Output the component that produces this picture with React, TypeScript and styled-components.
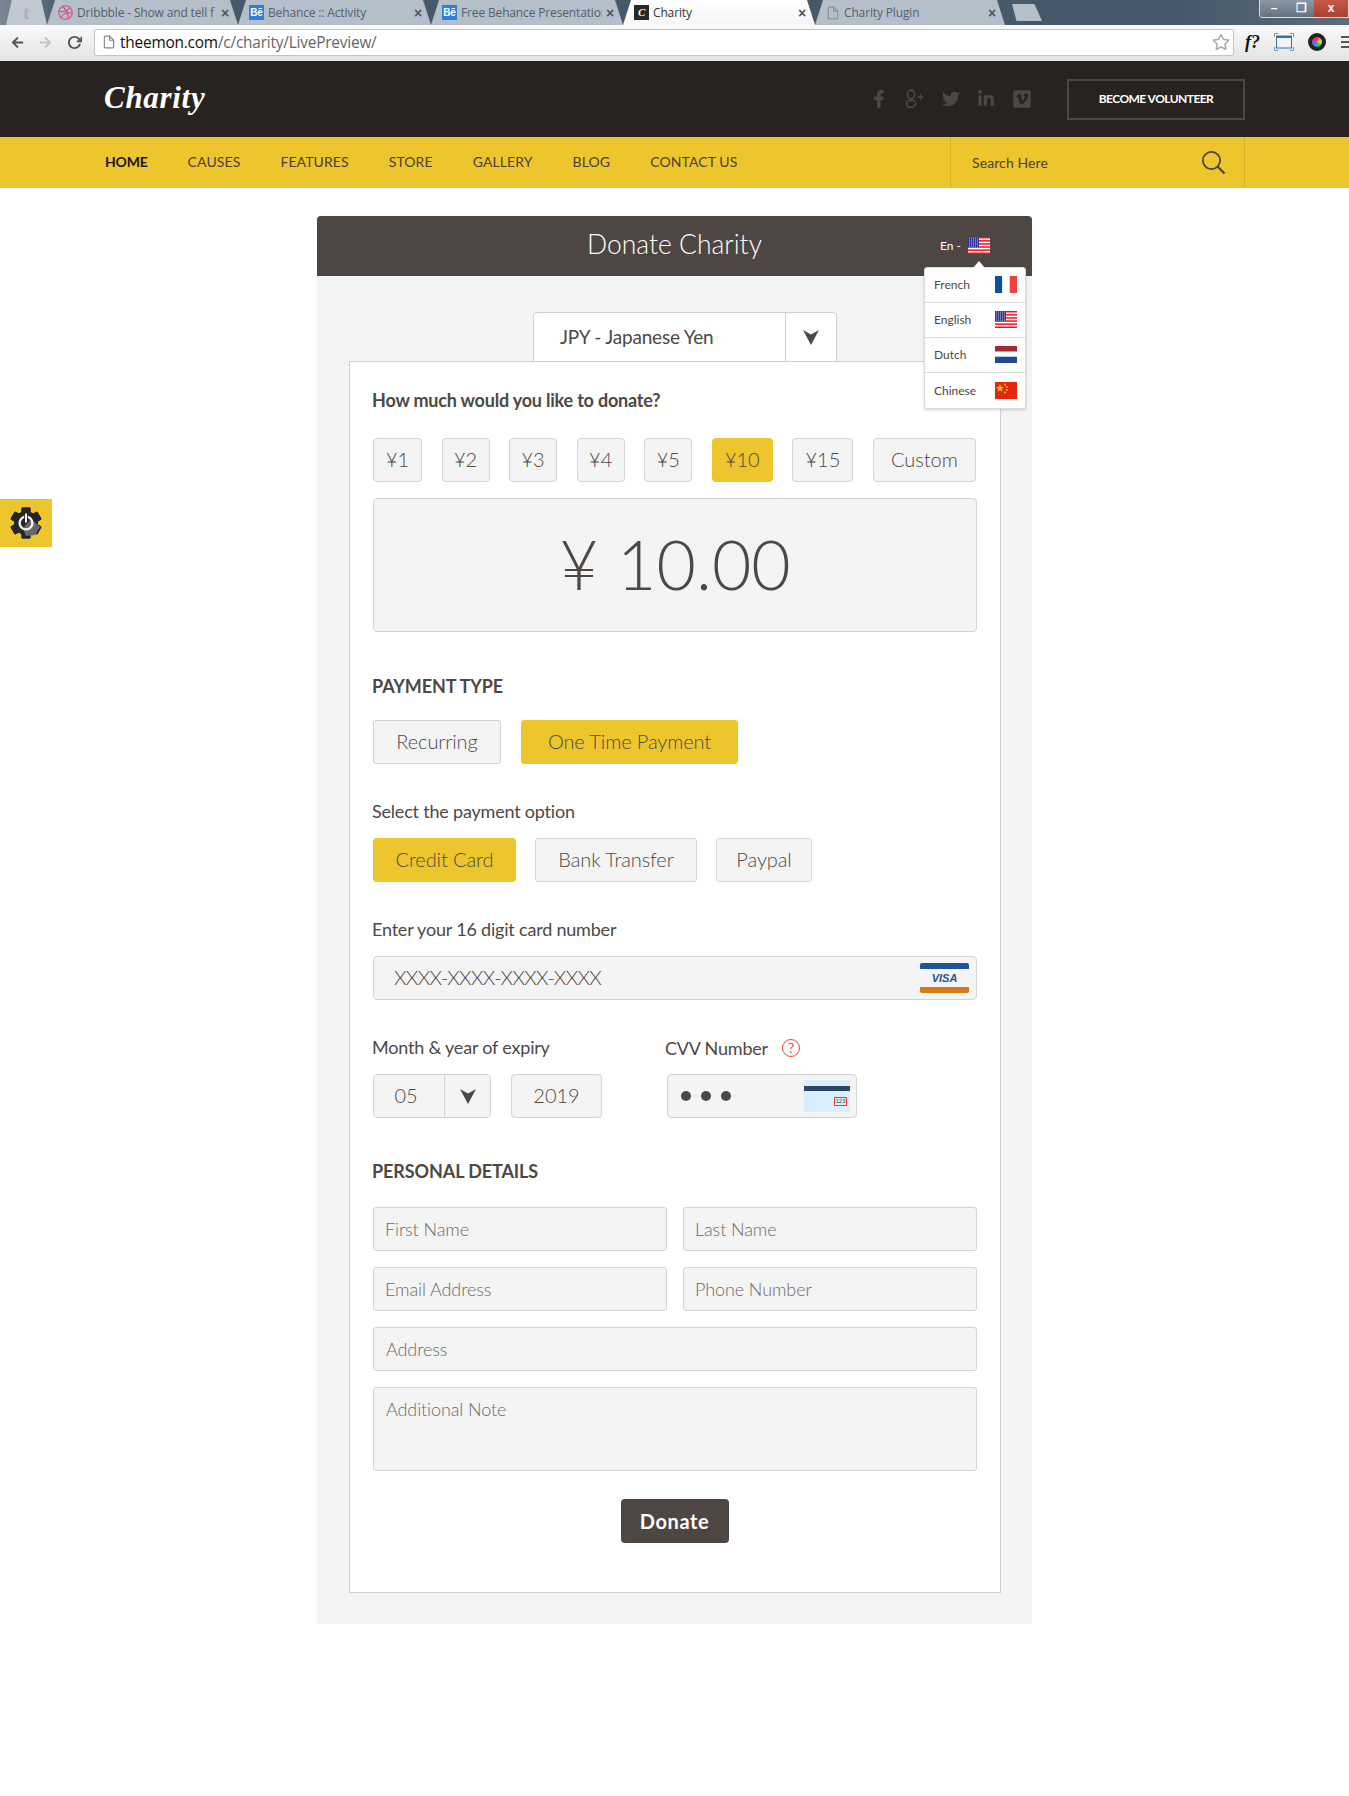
import React from 'react';
import styled, {createGlobalStyle} from 'styled-components';
import {FaArrowLeft, FaArrowRight, FaDribbble, FaFacebookF, FaLinkedinIn, FaTwitter, FaVimeoSquare, FaRegStar} from 'react-icons/fa';
import {FiFile, FiRotateCw} from 'react-icons/fi';

const GlobalStyle = createGlobalStyle`
  html, body {
    margin: 0;
    padding: 0;
    background: #fff;
    font-family: 'Lato', 'Liberation Sans', sans-serif;
    color: #4e4844;
  }
  * { box-sizing: border-box; }
`;

type FlagKind = 'fr' | 'us' | 'nl' | 'cn';

const Flag = ({kind}: {kind: FlagKind}) => {
  if (kind === 'fr') {
    return (
      <svg width="22" height="17" viewBox="0 0 22 17">
        <rect width="7.3" height="17" fill="#0b50a3" />
        <rect x="7.3" width="7.4" height="17" fill="#fff" />
        <rect x="14.7" width="7.3" height="17" fill="#f1423a" />
      </svg>
    );
  }
  if (kind === 'nl') {
    return (
      <svg width="22" height="17" viewBox="0 0 22 17">
        <rect width="22" height="5.5" fill="#a32a37" />
        <rect y="10.7" width="22" height="6.3" fill="#234a90" />
      </svg>
    );
  }
  if (kind === 'cn') {
    return (
      <svg width="22" height="17" viewBox="0 0 22 17">
        <rect width="22" height="17" fill="#e0290f" />
        <polygon points="5,2 6,5 9,5 6.6,6.8 7.5,9.6 5,8 2.5,9.6 3.4,6.8 1,5 4,5" fill="#ffd21f" />
        <circle cx="10" cy="2.5" r="0.9" fill="#ffd21f" />
        <circle cx="12" cy="5" r="0.9" fill="#ffd21f" />
        <circle cx="12" cy="8" r="0.9" fill="#ffd21f" />
        <circle cx="10" cy="10.5" r="0.9" fill="#ffd21f" />
      </svg>
    );
  }
  return (
    <svg width="22" height="17" viewBox="0 0 22 17">
      <rect width="22" height="17" fill="#fff" />
      {[0, 3.1, 6.2, 9.3, 12.4, 15.5].map(y => (
        <rect key={y} y={y} width="22" height="1.5" fill="#f0141e" />
      ))}
      <rect width="11" height="10" fill="#2f2fa0" />
      {[1, 3, 5, 7, 9].map(y =>
        [1, 3, 5, 7, 9].map(x => <circle key={`${x}-${y}`} cx={x + 0.5} cy={y} r="0.55" fill="#d6d6ee" />)
      )}
    </svg>
  );
};

const Chevron = () => (
  <svg width="16" height="15" viewBox="0 0 16 15">
    <polygon points="0,0 8,4.5 16,0 8,15" fill="#4e4844" />
  </svg>
);

const SearchGlyph = () => (
  <svg width="25" height="25" viewBox="0 0 25 25" fill="none" stroke="#4a4030" strokeWidth="1.7">
    <circle cx="10.5" cy="10.5" r="8.6" />
    <line x1="16.8" y1="16.8" x2="23.5" y2="23.5" strokeWidth="2.2" />
  </svg>
);

// thin "g+" mark, the icon packs only have the heavy or ringed one
const GooglePlusGlyph = () => (
  <svg width="20" height="20" viewBox="0 0 20 20" fill="none" stroke="currentColor" strokeWidth="1.6">
    <ellipse cx="6" cy="5.5" rx="3.6" ry="4.2" />
    <ellipse cx="6" cy="14.8" rx="4.6" ry="3.6" />
    <path d="M7.5 9.5C5.5 10.5 6 11.2 7.5 12M9 1.4H5.5" />
    <path d="M15.5 5V11M12.5 8H18.5" strokeWidth="1.3" />
  </svg>
);

const GearGlyph = () => (
  <svg width="32" height="32" viewBox="0 0 32 32">
    <g fill="#26262a">
      {[0, 60, 120, 180, 240, 300].map(a => (
        <rect key={a} x="11.5" y="0.5" width="9" height="31" rx="1" transform={`rotate(${a} 16 16)`} />
      ))}
      <circle cx="16" cy="16" r="12" />
    </g>
    <polygon points="21,12 30,20 25,28 16,29 13,21" fill="#68686c" />
    <circle cx="16" cy="16" r="6.4" fill="none" stroke="#f2f2f2" strokeWidth="2.4" />
    <rect x="14.2" y="6" width="3.6" height="10" fill="#26262a" />
    <rect x="15" y="6.5" width="2" height="9" fill="#f2f2f2" />
  </svg>
);

const ScreenGlyph = () => (
  <svg width="20" height="18" viewBox="0 0 20 18" fill="none">
    <rect x="2.5" y="3" width="15" height="12" stroke="#3f6f9f" strokeWidth="1" fill="#eef3f8" />
    <rect x="2.5" y="3" width="15" height="2" fill="#3f6f9f" />
    <path d="M0.5 4V0.5H4M16 0.5H19.5V4M19.5 14V17.5H16M4 17.5H0.5V14" stroke="#5a9ad0" />
  </svg>
);

const CAMERA_GRADIENT = 'conic-gradient(#e33, #fd3, #3c4, #29e, #c3c, #e33)';

const App = () => {
  const amounts = [
    {label: '¥1', w: 49},
    {label: '¥2', w: 48},
    {label: '¥3', w: 48},
    {label: '¥4', w: 48},
    {label: '¥5', w: 48},
    {label: '¥10', w: 61},
    {label: '¥15', w: 61},
    {label: 'Custom', w: 103},
  ];
  const navItems = ['HOME', 'CAUSES', 'FEATURES', 'STORE', 'GALLERY', 'BLOG', 'CONTACT US'];
  const languages: {name: string; flag: FlagKind}[] = [
    {name: 'French', flag: 'fr'},
    {name: 'English', flag: 'us'},
    {name: 'Dutch', flag: 'nl'},
    {name: 'Chinese', flag: 'cn'},
  ];

  return (
    <Page>
      <GlobalStyle />
      <TabStrip>
        <PinnedTab>t</PinnedTab>
        <Tab $w={191}>
          <FaDribbble size={15} color="#d9487f" />
          <TabTitle>Dribbble - Show and tell f</TabTitle>
          <TabClose>×</TabClose>
        </Tab>
        <Tab $w={193}>
          <BeBadge>Bē</BeBadge>
          <TabTitle>Behance :: Activity</TabTitle>
          <TabClose>×</TabClose>
        </Tab>
        <Tab $w={192}>
          <BeBadge>Bē</BeBadge>
          <TabTitle>Free Behance Presentation</TabTitle>
          <TabClose>×</TabClose>
        </Tab>
        <Tab $w={192} $active>
          <CharityBadge>C</CharityBadge>
          <TabTitle>Charity</TabTitle>
          <TabClose>×</TabClose>
        </Tab>
        <Tab $w={190}>
          <FiFile size={14} color="#8a929c" />
          <TabTitle>Charity Plugin</TabTitle>
          <TabClose>×</TabClose>
        </Tab>
        <NewTab />
        <WindowButtons>
          <WinButton $w={28}>–</WinButton>
          <WinButton $w={26}>❐</WinButton>
          <WinButton $w={34} $close>x</WinButton>
        </WindowButtons>
      </TabStrip>

      <Toolbar>
        <NavArrows>
          <FaArrowLeft size={13} color="#555" />
          <FaArrowRight size={13} color="#c4c4c4" />
          <FiRotateCw size={15} color="#555" strokeWidth={3} />
        </NavArrows>
        <UrlBar>
          <FiFile size={14} color="#888" />
          <UrlText>theemon.com<UrlPath>/c/charity/LivePreview/</UrlPath></UrlText>
          <FaRegStar size={18} color="#aaa" />
        </UrlBar>
        <ToolIcons>
          <FxMark>f?</FxMark>
          <ScreenGlyph />
          <CameraIcon />
          <MenuIcon />
        </ToolIcons>
      </Toolbar>

      <TopBar>
        <TopInner>
          <Logo>Charity</Logo>
          <TopRight>
            <Socials>
              <FaFacebookF size={18} />
              <GooglePlusGlyph />
              <FaTwitter size={18} />
              <FaLinkedinIn size={18} />
              <FaVimeoSquare size={20} />
            </Socials>
            <VolunteerButton>BECOME VOLUNTEER</VolunteerButton>
          </TopRight>
        </TopInner>
      </TopBar>

      <NavBar>
        <NavInner>
          <NavList>
            {navItems.map((item, i) => (
              <NavLink key={item} $active={i === 0}>{item}</NavLink>
            ))}
          </NavList>
          <SearchBox>
            <span>Search Here</span>
            <SearchGlyph />
          </SearchBox>
        </NavInner>
      </NavBar>

      <SideWidget><GearGlyph /></SideWidget>

      <Main>
        <Panel>
          <PanelHeader>
            <PanelTitle>Donate Charity</PanelTitle>
            <LangToggle>En - <Flag kind="us" /></LangToggle>
            <LangMenu>
              {languages.map(l => (
                <LangRow key={l.name}>
                  <span>{l.name}</span>
                  <Flag kind={l.flag} />
                </LangRow>
              ))}
            </LangMenu>
          </PanelHeader>

          <PanelBody>
            <CurrencySelect>
              <CurrencyLabel>JPY - Japanese Yen</CurrencyLabel>
              <CurrencyArrow><Chevron /></CurrencyArrow>
            </CurrencySelect>

            <Card>
              <Heading $mt={0}>How much would you like to donate?</Heading>
              <AmountRow>
                {amounts.map(a => (
                  <ChoiceButton key={a.label} $w={a.w} $active={a.label === '¥10'}>{a.label}</ChoiceButton>
                ))}
              </AmountRow>
              <AmountDisplay>¥ 10.00</AmountDisplay>

              <SectionHeading $mt={43}>PAYMENT TYPE</SectionHeading>
              <ButtonRow $mt={23} $gap={20}>
                <WideButton $w={128}>Recurring</WideButton>
                <WideButton $w={217} $active>One Time Payment</WideButton>
              </ButtonRow>

              <Label $mt={36}>Select the payment option</Label>
              <ButtonRow $mt={16} $gap={19}>
                <WideButton $w={143} $active>Credit Card</WideButton>
                <WideButton $w={162}>Bank Transfer</WideButton>
                <WideButton $w={96}>Paypal</WideButton>
              </ButtonRow>

              <Label $mt={36}>Enter your 16 digit card number</Label>
              <CardInput>
                <CardMask>XXXX-XXXX-XXXX-XXXX</CardMask>
                <VisaLogo><VisaText>VISA</VisaText></VisaLogo>
              </CardInput>

              <ExpiryGrid>
                <div>
                  <Label $mt={0}>Month &amp; year of expiry</Label>
                  <ExpiryRow>
                    <MonthSelect>
                      <MonthValue>05</MonthValue>
                      <MonthArrow><Chevron /></MonthArrow>
                    </MonthSelect>
                    <YearBox>2019</YearBox>
                  </ExpiryRow>
                </div>
                <div>
                  <CvvLabel>CVV Number <HelpMark>?</HelpMark></CvvLabel>
                  <CvvBox>
                    <Dots><i /><i /><i /></Dots>
                    <CvvCard>
                      <CvvStripe />
                      <CvvCode>123</CvvCode>
                    </CvvCard>
                  </CvvBox>
                </div>
              </ExpiryGrid>

              <SectionHeading $mt={42}>PERSONAL DETAILS</SectionHeading>
              <FieldGrid>
                <Field>First Name</Field>
                <Field>Last Name</Field>
                <Field>Email Address</Field>
                <Field>Phone Number</Field>
                <WideField>Address</WideField>
                <NoteField>Additional Note</NoteField>
              </FieldGrid>

              <DonateRow>
                <DonateButton>Donate</DonateButton>
              </DonateRow>
            </Card>
          </PanelBody>
        </Panel>
      </Main>
    </Page>
  );
};

export default App;

const Page = styled.div`
  width: 1349px;
  height: 1796px;
  position: relative;
  overflow: hidden;
  background: #fff;
`;

const TabStrip = styled.div`
  height: 25px;
  display: flex;
  align-items: flex-end;
  padding-left: 6px;
  background: linear-gradient(90deg, #7a8896 0, #46586a 5%, #46586a 88%, #5d6c7a 100%);
  font-family: 'Open Sans', 'Liberation Sans', sans-serif;
`;

const PinnedTab = styled.div`
  width: 41px;
  height: 25px;
  text-align: center;
  font: bold 19px/25px 'Liberation Serif', serif;
  color: #a7b2be;
  background: #c0c8d1;
  clip-path: polygon(0 100%, 14% 0, 86% 0, 100% 100%);
`;

const Tab = styled.div<{$w: number; $active?: boolean}>`
  width: ${p => p.$w}px;
  height: 25px;
  display: flex;
  align-items: center;
  gap: 4px;
  padding: 0 9px 0 11px;
  font-size: 12px;
  letter-spacing: -0.15px;
  color: ${p => (p.$active ? '#333' : '#54606c')};
  background: ${p => (p.$active ? 'linear-gradient(#fff, #f6f6f6)' : '#b5bfca')};
  clip-path: polygon(0 100%, 8px 0, calc(100% - 8px) 0, 100% 100%);
`;

const TabTitle = styled.span`
  flex: 1;
  white-space: nowrap;
  overflow: hidden;
`;

const TabClose = styled.span`
  font: bold 14px/1 'Liberation Sans', sans-serif;
  color: #555;
`;

const BeBadge = styled.span`
  width: 15px;
  height: 15px;
  background: #2b7fe0;
  color: #fff;
  font: bold 10px/15px 'Liberation Sans', sans-serif;
  text-align: center;
`;

const CharityBadge = styled.span`
  width: 15px;
  height: 15px;
  background: #2b2724;
  color: #fff;
  font: italic bold 11px/15px 'Liberation Serif', serif;
  text-align: center;
`;

const NewTab = styled.div`
  width: 30px;
  height: 17px;
  margin: 0 0 4px 7px;
  background: #b5bfca;
  clip-path: polygon(0 0, 75% 0, 100% 100%, 15% 100%);
`;

const WindowButtons = styled.div`
  margin: 0 0 auto auto;
  display: flex;
  height: 18px;
  border: 1px solid #d8dde2;
  border-top: none;
  border-radius: 0 0 0 4px;
  overflow: hidden;
`;

const WinButton = styled.div<{$w: number; $close?: boolean}>`
  width: ${p => p.$w}px;
  text-align: center;
  font: bold 12px/16px 'Liberation Sans', sans-serif;
  color: #fff;
  background: ${p => (p.$close ? 'linear-gradient(#c4584c, #a8402f)' : 'linear-gradient(#8c98a4, #64727f)')};
`;

const Toolbar = styled.div`
  height: 36px;
  display: flex;
  align-items: center;
  padding-bottom: 2px;
  background: linear-gradient(#fafafa, #e4e4e4);
  font-family: 'Open Sans', 'Liberation Sans', sans-serif;
`;

const NavArrows = styled.div`
  width: 94px;
  display: flex;
  align-items: center;
  gap: 15px;
  padding-left: 11px;
`;

const UrlBar = styled.div`
  width: 1140px;
  height: 27px;
  display: flex;
  align-items: center;
  gap: 4px;
  padding: 0 3px 0 7px;
  background: #fff;
  border: 1px solid #c4c4c4;
  border-radius: 2px;
`;

const UrlText = styled.span`
  flex: 1;
  font-size: 15.4px;
  letter-spacing: -0.2px;
  color: #111;
`;

const UrlPath = styled.span`
  color: #666;
`;

const ToolIcons = styled.div`
  flex: 1;
  display: flex;
  align-items: center;
  gap: 14px;
  padding-left: 11px;
`;

const FxMark = styled.span`
  font: italic bold 18px/1 'Liberation Serif', serif;
  color: #111;
`;

const CameraIcon = styled.span`
  width: 18px;
  height: 18px;
  border-radius: 50%;
  border: 4px solid #222;
  background: ${CAMERA_GRADIENT};
`;

const MenuIcon = styled.span`
  width: 8px;
  height: 12px;
  margin-left: 1px;
  background: repeating-linear-gradient(#555 0 2px, transparent 2px 5px);
`;

const TopBar = styled.header`
  height: 76px;
  background: #282320;
`;

const TopInner = styled.div`
  height: 100%;
  width: 1141px;
  margin-left: 104px;
  display: flex;
  align-items: center;
  justify-content: space-between;
`;

const Logo = styled.div`
  font: italic bold 31px/1 'Liberation Serif', serif;
  color: #fff;
  letter-spacing: 0.7px;
  padding-bottom: 3px;
`;

const TopRight = styled.div`
  display: flex;
  align-items: center;
  gap: 35px;
`;

const Socials = styled.div`
  display: flex;
  align-items: center;
  gap: 17px;
  color: #4e4844;
`;

const VolunteerButton = styled.div`
  width: 178px;
  height: 41px;
  border: 2px solid #4e4844;
  color: #fff;
  font-size: 12px;
  font-weight: 700;
  letter-spacing: -0.55px;
  line-height: 35px;
  text-align: center;
`;

const NavBar = styled.nav`
  height: 51px;
  background: #edc62d;
`;

const NavInner = styled.div`
  height: 100%;
  width: 1140px;
  margin-left: 105px;
  display: flex;
  justify-content: space-between;
`;

const NavList = styled.div`
  display: flex;
  align-items: center;
  gap: 40px;
  padding-bottom: 3px;
`;

const NavLink = styled.span<{$active?: boolean}>`
  font-size: 14px;
  letter-spacing: ${p => (p.$active ? '-0.2px' : '0.1px')};
  font-weight: ${p => (p.$active ? 700 : 400)};
  color: ${p => (p.$active ? '#1c1512' : '#4a4030')};
`;

const SearchBox = styled.div`
  width: 295px;
  display: flex;
  align-items: center;
  justify-content: space-between;
  padding: 0 18px 0 21px;
  border-left: 1px solid #d6b22a;
  border-right: 1px solid #d6b22a;
  font-size: 14px;
  letter-spacing: 0.1px;
  color: #4a4030;
`;

const SideWidget = styled.div`
  position: absolute;
  left: 0;
  top: 499px;
  width: 52px;
  height: 48px;
  display: flex;
  align-items: center;
  justify-content: center;
  background: #edc62d;
`;

const Main = styled.main`
  padding: 28px 0 0 317px;
`;

const Panel = styled.section`
  width: 715px;
  background: #f4f4f4;
  border-radius: 4px 4px 0 0;
`;

const PanelHeader = styled.div`
  position: relative;
  height: 60px;
  padding-bottom: 4px;
  background: #4e4642;
  border-radius: 4px 4px 0 0;
  display: flex;
  align-items: center;
  justify-content: center;
`;

const PanelTitle = styled.h1`
  margin: 0;
  font-size: 26.5px;
  font-weight: 300;
  color: #fff;
`;

const LangToggle = styled.div`
  position: absolute;
  top: 21px;
  left: 623px;
  display: flex;
  align-items: center;
  gap: 7px;
  font-size: 12px;
  color: #fff;
`;

const LangMenu = styled.div`
  position: absolute;
  top: 51px;
  left: 607px;
  width: 102px;
  z-index: 3;
  background: #fff;
  border: 1px solid #dcdcdc;
  border-radius: 3px;
  box-shadow: 0 1px 3px rgba(0, 0, 0, 0.18);

  &::before {
    content: '';
    position: absolute;
    top: -7px;
    left: 48px;
    border-left: 6px solid transparent;
    border-right: 6px solid transparent;
    border-bottom: 7px solid #fff;
  }
`;

const LangRow = styled.div`
  height: 35px;
  display: flex;
  align-items: center;
  justify-content: space-between;
  padding: 0 8px 1px 9px;
  font-size: 12px;
  color: #4e4844;
  border-bottom: 1px solid #dcdcdc;

  &:last-child {
    border-bottom: none;
  }
`;

const PanelBody = styled.div`
  padding: 36px 31px 31px 32px;
  display: flex;
  flex-direction: column;
  align-items: center;
`;

const CurrencySelect = styled.div`
  width: 304px;
  height: 50px;
  margin: 0 0 -1px 20px;
  display: flex;
  background: #fff;
  border: 1px solid #cfcfcf;
  border-radius: 4px 4px 0 0;
`;

const CurrencyLabel = styled.div`
  flex: 1;
  padding: 0 0 2px 26px;
  display: flex;
  align-items: center;
  font-size: 19px;
  font-weight: 400;
  letter-spacing: -0.2px;
`;

const CurrencyArrow = styled.div`
  width: 51px;
  display: flex;
  align-items: center;
  justify-content: center;
  border-left: 1px solid #cfcfcf;
`;

const Card = styled.div`
  width: 652px;
  height: 1232px;
  padding: 27px 23px 0 22px;
  background: #fff;
  border: 1px solid #cfcfcf;
`;

const Heading = styled.h2<{$mt: number}>`
  margin: ${p => p.$mt}px 0 0;
  font-size: 18px;
  line-height: 22px;
  font-weight: 700;
  letter-spacing: -0.2px;
  color: #4e4844;
`;

const SectionHeading = styled(Heading)`
  letter-spacing: -0.1px;
`;

const Label = styled.div<{$mt: number}>`
  margin-top: ${p => p.$mt}px;
  font-size: 18px;
  line-height: 22px;
  letter-spacing: -0.2px;
  color: #4e4844;
`;

const AmountRow = styled.div`
  margin: 27px 1px 0 1px;
  display: flex;
  justify-content: space-between;
`;

const ChoiceButton = styled.div<{$w: number; $active?: boolean}>`
  width: ${p => p.$w}px;
  height: 44px;
  padding-bottom: 2px;
  display: flex;
  align-items: center;
  justify-content: center;
  font-size: 20px;
  font-weight: 300;
  color: #4e4844;
  background: ${p => (p.$active ? '#edc62d' : '#f4f4f4')};
  border: 1px solid ${p => (p.$active ? '#edc62d' : '#d4d4d4')};
  border-radius: 4px;
`;

const AmountDisplay = styled.div`
  margin: 16px 0 0 1px;
  height: 134px;
  padding-bottom: 4px;
  display: flex;
  align-items: center;
  justify-content: center;
  font-size: 68px;
  font-weight: 300;
  background: #f4f4f4;
  border: 1px solid #d4d4d4;
  border-radius: 4px;
`;

const ButtonRow = styled.div<{$mt: number; $gap: number}>`
  margin: ${p => p.$mt}px 0 0 1px;
  display: flex;
  gap: ${p => p.$gap}px;
`;

const WideButton = styled.div<{$w: number; $active?: boolean}>`
  width: ${p => p.$w}px;
  height: 44px;
  padding-bottom: 2px;
  display: flex;
  align-items: center;
  justify-content: center;
  font-size: 20px;
  font-weight: 300;
  letter-spacing: -0.1px;
  color: #4e4844;
  background: ${p => (p.$active ? '#edc62d' : '#f4f4f4')};
  border: 1px solid ${p => (p.$active ? '#edc62d' : '#d4d4d4')};
  border-radius: 3px;
`;

const CardInput = styled.div`
  margin: 16px 0 0 1px;
  height: 44px;
  display: flex;
  align-items: center;
  justify-content: space-between;
  padding: 0 7px 0 20px;
  background: #f4f4f4;
  border: 1px solid #d4d4d4;
  border-radius: 4px;
`;

const CardMask = styled.span`
  font-size: 20px;
  font-weight: 300;
  letter-spacing: -0.6px;
  margin-top: -2px;
`;

const VisaLogo = styled.div`
  width: 49px;
  height: 30px;
  display: flex;
  align-items: center;
  justify-content: center;
  border-top: 6px solid #1f5596;
  border-bottom: 6px solid #db7a14;
  border-radius: 2px;
  background: #f4f4f4;
`;

const VisaText = styled.span`
  font: italic bold 11px/1 'Liberation Sans', sans-serif;
  color: #1f5596;
`;

const ExpiryGrid = styled.div`
  margin-top: 36px;
  display: grid;
  grid-template-columns: 293px 1fr;
`;

const CvvLabel = styled(Label).attrs({$mt: 0})`
  display: flex;
  align-items: center;
  gap: 10px;
  white-space: pre;
  padding-top: 1px;
  margin-bottom: -1px;
`;

const HelpMark = styled.span`
  width: 18px;
  height: 18px;
  border: 1px solid #e8493c;
  border-radius: 50%;
  color: #e8493c;
  font-size: 14px;
  line-height: 16px;
  text-align: center;
`;

const ExpiryRow = styled.div`
  margin: 16px 0 0 1px;
  display: flex;
  gap: 20px;
`;

const MonthSelect = styled.div`
  width: 118px;
  height: 44px;
  display: flex;
  background: #f4f4f4;
  border: 1px solid #d4d4d4;
  border-radius: 4px;
`;

const MonthValue = styled.div`
  width: 70px;
  padding: 0 6px 2px 0;
  display: flex;
  align-items: center;
  justify-content: center;
  font-size: 20px;
  font-weight: 300;
`;

const MonthArrow = styled.div`
  flex: 1;
  display: flex;
  align-items: center;
  justify-content: center;
  border-left: 1px solid #d4d4d4;
`;

const YearBox = styled.div`
  width: 91px;
  height: 44px;
  padding-bottom: 2px;
  display: flex;
  align-items: center;
  justify-content: center;
  font-size: 20px;
  font-weight: 300;
  background: #f4f4f4;
  border: 1px solid #d4d4d4;
  border-radius: 4px;
`;

const CvvBox = styled.div`
  width: 190px;
  height: 44px;
  margin: 16px 0 0 2px;
  display: flex;
  align-items: center;
  justify-content: space-between;
  padding: 0 6px 0 13px;
  background: #f4f4f4;
  border: 1px solid #d4d4d4;
  border-radius: 4px;
`;

const Dots = styled.div`
  display: flex;
  gap: 10px;

  i {
    width: 10px;
    height: 10px;
    border-radius: 50%;
    background: #4e4844;
  }
`;

const CvvCard = styled.div`
  position: relative;
  width: 46px;
  height: 32px;
  background: #d9edfc;
`;

const CvvStripe = styled.div`
  margin-top: 6px;
  height: 5px;
  background: #2c4564;
`;

const CvvCode = styled.span`
  position: absolute;
  right: 3px;
  bottom: 6px;
  width: 13px;
  height: 9px;
  border: 1px solid #e23b30;
  font: 6px/7px 'Liberation Sans', sans-serif;
  color: #444;
  text-align: center;
`;

const FieldGrid = styled.div`
  margin: 25px 0 0 1px;
  display: grid;
  grid-template-columns: 294px 294px;
  justify-content: space-between;
  row-gap: 16px;
`;

const Field = styled.div`
  height: 44px;
  padding: 0 11px;
  display: flex;
  align-items: center;
  font-size: 18px;
  font-weight: 300;
  letter-spacing: -0.1px;
  color: #6e6966;
  background: #f4f4f4;
  border: 1px solid #d4d4d4;
  border-radius: 3px;
`;

const WideField = styled(Field)`
  grid-column: 1 / -1;
  padding: 0 12px;
`;

const NoteField = styled(WideField)`
  height: 84px;
  align-items: flex-start;
  padding-top: 10px;
`;

const DonateRow = styled.div`
  margin-top: 28px;
  display: flex;
  justify-content: center;
`;

const DonateButton = styled.div`
  width: 108px;
  height: 44px;
  display: flex;
  align-items: center;
  justify-content: center;
  font-size: 20px;
  font-weight: 700;
  letter-spacing: 0.6px;
  color: #fff;
  background: #4e4642;
  border-radius: 4px;
`;
